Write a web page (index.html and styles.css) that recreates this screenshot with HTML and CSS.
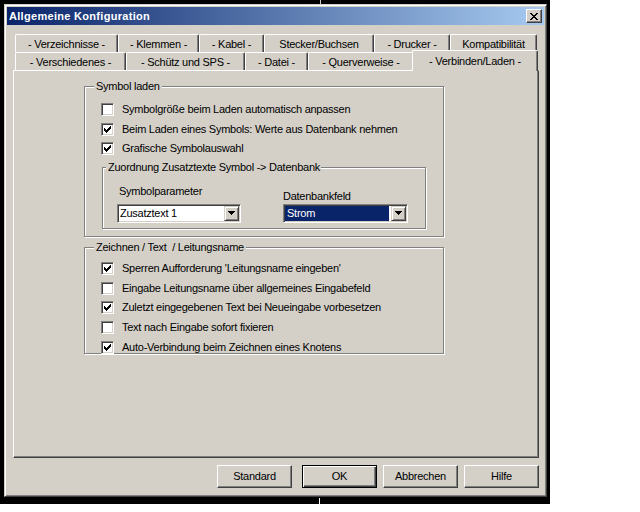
FILE: index.html
```html
<!DOCTYPE html>
<html>
<head>
<meta charset="utf-8">
<link rel="stylesheet" href="styles.css">
</head>
<body>
<div class="desk">
  <div class="dialog">
    <div class="titlebar">
      <span class="title">Allgemeine Konfiguration</span>
      <span class="close"><svg width="8" height="7" viewBox="0 0 8 7" shape-rendering="crispEdges"><path d="M0 0h2v1H0zM6 0h2v1H6zM1 1h2v1H1zM5 1h2v1H5zM2 2h4v1H2zM3 3h2v1H3zM2 4h4v1H2zM1 5h2v1H1zM5 5h2v1H5zM0 6h2v1H0zM6 6h2v1H6z" fill="#000"/></svg></span>
    </div>
    <div class="tabs">
      <div class="tabrow">
        <div class="tab t-verz">- Verzeichnisse -</div>
        <div class="tab t-klem">- Klemmen -</div>
        <div class="tab t-kab">- Kabel -</div>
        <div class="tab t-steck">Stecker/Buchsen</div>
        <div class="tab t-druck">- Drucker -</div>
        <div class="tab t-komp">Kompatibilität</div>
      </div>
      <div class="tabrow">
        <div class="tab t-versch">- Verschiedenes -</div>
        <div class="tab t-schuetz">- Schütz und SPS -</div>
        <div class="tab t-datei">- Datei -</div>
        <div class="tab t-quer">- Querverweise -</div>
        <div class="tab t-verb sel">- Verbinden/Laden -</div>
      </div>
    </div>
    <div class="panel">
      <div class="group g1">
        <div class="gtitle">Symbol laden</div>
        <div class="row"><span class="cb"></span><span class="lbltext">Symbolgröße beim Laden automatisch anpassen</span></div>
        <div class="row"><span class="cb"><svg width="7" height="7" viewBox="0 0 7 7" shape-rendering="crispEdges"><path d="M0 2h1v3H0zM1 3h1v3H1zM2 4h1v3H2zM3 3h1v3H3zM4 2h1v3H4zM5 1h1v3H5zM6 0h1v3H6z" fill="#000"/></svg></span><span class="lbltext">Beim Laden eines Symbols: Werte aus Datenbank nehmen</span></div>
        <div class="row"><span class="cb"><svg width="7" height="7" viewBox="0 0 7 7" shape-rendering="crispEdges"><path d="M0 2h1v3H0zM1 3h1v3H1zM2 4h1v3H2zM3 3h1v3H3zM4 2h1v3H4zM5 1h1v3H5zM6 0h1v3H6z" fill="#000"/></svg></span><span class="lbltext">Grafische Symbolauswahl</span></div>
        <div class="group inner">
          <div class="gtitle gt-inner">Zuordnung Zusatztexte Symbol -&gt; Datenbank</div>
          <div class="field f1">
            <div class="flabel fl1">Symbolparameter</div>
            <div class="combo">
              <span class="cval">Zusatztext 1</span>
              <span class="drop"><svg width="7" height="4" viewBox="0 0 7 4" shape-rendering="crispEdges"><path d="M0 0h7v1H0zM1 1h5v1H1zM2 2h3v1H2zM3 3h1v1H3z" fill="#000"/></svg></span>
            </div>
          </div>
          <div class="field f2">
            <div class="flabel fl2">Datenbankfeld</div>
            <div class="combo">
              <span class="cval csel">Strom</span>
              <span class="drop"><svg width="7" height="4" viewBox="0 0 7 4" shape-rendering="crispEdges"><path d="M0 0h7v1H0zM1 1h5v1H1zM2 2h3v1H2zM3 3h1v1H3z" fill="#000"/></svg></span>
            </div>
          </div>
        </div>
      </div>
      <div class="group g2">
        <div class="gtitle">Zeichnen / Text  / Leitungsname</div>
        <div class="row"><span class="cb"><svg width="7" height="7" viewBox="0 0 7 7" shape-rendering="crispEdges"><path d="M0 2h1v3H0zM1 3h1v3H1zM2 4h1v3H2zM3 3h1v3H3zM4 2h1v3H4zM5 1h1v3H5zM6 0h1v3H6z" fill="#000"/></svg></span><span class="lbltext">Sperren Aufforderung 'Leitungsname eingeben'</span></div>
        <div class="row"><span class="cb"></span><span class="lbltext">Eingabe Leitungsname über allgemeines Eingabefeld</span></div>
        <div class="row"><span class="cb"><svg width="7" height="7" viewBox="0 0 7 7" shape-rendering="crispEdges"><path d="M0 2h1v3H0zM1 3h1v3H1zM2 4h1v3H2zM3 3h1v3H3zM4 2h1v3H4zM5 1h1v3H5zM6 0h1v3H6z" fill="#000"/></svg></span><span class="lbltext">Zuletzt eingegebenen Text bei Neueingabe vorbesetzen</span></div>
        <div class="row"><span class="cb"></span><span class="lbltext">Text nach Eingabe sofort fixieren</span></div>
        <div class="row"><span class="cb"><svg width="7" height="7" viewBox="0 0 7 7" shape-rendering="crispEdges"><path d="M0 2h1v3H0zM1 3h1v3H1zM2 4h1v3H2zM3 3h1v3H3zM4 2h1v3H4zM5 1h1v3H5zM6 0h1v3H6z" fill="#000"/></svg></span><span class="lbltext">Auto-Verbindung beim Zeichnen eines Knotens</span></div>
      </div>
    </div>
    <div class="buttons">
      <div class="btn">Standard</div>
      <div class="btn default">OK</div>
      <div class="btn">Abbrechen</div>
      <div class="btn">Hilfe</div>
    </div>
  </div>
</div>
</body>
</html>
```
FILE: styles.css
```css
html, body {
  margin: 0;
  padding: 0;
  background: #fff;
}
body {
  font-family: "Liberation Sans", Arial, sans-serif;
  font-size: 11px;
  letter-spacing: -0.25px;
  color: #000;
}
.desk {
  position: relative;
  width: 550px;
  height: 504px;
  box-sizing: border-box;
  padding: 4px 0 0 4px;
  background: #000;
}
.desk::before {
  content: "";
  position: absolute;
  left: 320px;
  top: 0;
  width: 1px;
  height: 4px;
  background: #c8c8c8;
}
.desk::after {
  content: "";
  position: absolute;
  left: 319px;
  top: 498px;
  width: 1px;
  height: 6px;
  background: #fff;
}
.dialog {
  box-sizing: border-box;
  width: 543px;
  height: 493px;
  background: #d4d0c8;
  border: 1px solid;
  border-color: #d4d0c8 #404040 #404040 #d4d0c8;
  box-shadow: inset 1px 1px #fff, inset -1px -1px #808080;
  padding: 2px;
}
.titlebar {
  height: 18px;
  display: flex;
  align-items: center;
  justify-content: space-between;
  background: linear-gradient(to right, #0a246a, #a6caf0);
  padding: 0 2px 0 2px;
}
.title {
  color: #fff;
  font-weight: bold;
  letter-spacing: 0.3px;
  line-height: 18px;
}
.close {
  box-sizing: border-box;
  width: 16px;
  height: 14px;
  background: #d4d0c8;
  border: 1px solid;
  border-color: #fff #404040 #404040 #fff;
  box-shadow: inset -1px -1px #808080;
  display: flex;
  align-items: center;
  justify-content: center;
  padding-right: 1px;
}
.close svg, .cb svg, .drop svg {
  display: block;
}
.tabs {
  margin-top: 9px;
  padding-left: 8px;
}
.tabrow {
  display: flex;
  align-items: flex-start;
  height: 18px;
}
.tab {
  box-sizing: border-box;
  height: 18px;
  border-top: 1px solid #fff;
  border-left: 1px solid #fff;
  border-right: 1px solid #404040;
  box-shadow: inset -1px 0 #808080;
  border-radius: 2px 2px 0 0;
  background: #d4d0c8;
  text-align: center;
  line-height: 16px;
  padding-top: 1px;
  white-space: nowrap;
}
.t-verz { width: 103px; }
.t-klem { width: 81px; }
.t-kab { width: 65px; }
.t-steck { width: 110px; }
.t-druck { width: 76px; }
.t-komp { width: 87px; }
.t-versch { width: 111px; }
.t-schuetz { width: 119px; }
.t-datei { width: 63px; }
.t-quer { width: 106px; }
.t-verb { width: 122px; }
.tab.sel {
  position: relative;
  z-index: 2;
  height: 21px;
  width: 126px;
  margin: -2px -2px 0 -2px;
  padding-top: 2px;
}
.panel {
  box-sizing: border-box;
  margin-left: 6px;
  width: 526px;
  height: 388px;
  border: 1px solid;
  border-color: #fff #404040 #404040 #fff;
  box-shadow: inset -1px -1px #808080;
  padding: 15px 0 0 70px;
}
.group {
  position: relative;
  box-sizing: border-box;
  border: 1px solid #808080;
  box-shadow: inset 1px 1px #fff, 1px 1px #fff;
}
.g1 {
  width: 360px;
  height: 151px;
  padding: 13px 0 0 16px;
}
.g2 {
  width: 360px;
  height: 107px;
  margin-top: 10px;
  padding: 11px 0 0 16px;
}
.gtitle {
  position: absolute;
  top: -7px;
  left: 9px;
  padding: 0 2px;
  line-height: 13px;
  background: #d4d0c8;
  white-space: pre;
}
.gt-inner {
  left: 3px;
  padding: 0 1px 0 2px;
}
.row {
  display: flex;
  align-items: center;
  height: 19.6px;
  line-height: 13px;
}
.cb {
  box-sizing: border-box;
  width: 13px;
  height: 13px;
  padding: 2px;
  background: #fff;
  border: 1px solid;
  border-color: #808080 #fff #fff #808080;
  box-shadow: inset 1px 1px #404040, inset -1px -1px #d4d0c8;
  margin-right: 8px;
  flex: none;
}
.lbltext {
  white-space: nowrap;
}
.inner {
  width: 324px;
  height: 62px;
  margin: 8px 0 0 1px;
  display: flex;
  align-items: flex-end;
  padding: 0 0 5px 14px;
}
.field {
  display: flex;
  flex-direction: column;
}
.f1 { width: 124px; }
.f2 { width: 125px; margin-left: 42px; }
.flabel {
  line-height: 13px;
  padding-left: 2px;
  white-space: nowrap;
}
.fl1 { margin-bottom: 6px; }
.fl2 { margin-bottom: 1px; padding-left: 0; }
.combo {
  box-sizing: border-box;
  height: 19px;
  background: #fff;
  border: 1px solid;
  border-color: #808080 #fff #fff #808080;
  box-shadow: inset 1px 1px #404040, inset -1px -1px #d4d0c8;
  padding: 1px;
  display: flex;
}
.cval {
  flex: 1;
  line-height: 15px;
  padding-left: 1px;
  white-space: nowrap;
}
.csel {
  background: #0a246a;
  color: #fff;
  margin-right: 2px;
  padding-left: 2px;
}
.drop {
  box-sizing: border-box;
  width: 15px;
  height: 15px;
  background: #d4d0c8;
  border: 1px solid;
  border-color: #d4d0c8 #404040 #404040 #d4d0c8;
  box-shadow: inset 1px 1px #fff, inset -1px -1px #808080;
  display: flex;
  align-items: center;
  justify-content: center;
  flex: none;
}
.buttons {
  display: flex;
  justify-content: flex-end;
  width: 526px;
  margin: 7px 0 0 6px;
}
.btn {
  box-sizing: border-box;
  width: 75px;
  height: 23px;
  margin-left: 6px;
  border: 1px solid;
  border-color: #fff #404040 #404040 #fff;
  box-shadow: inset -1px -1px #808080;
  text-align: center;
  line-height: 20px;
}
.btn.default {
  margin-left: 10px;
  border-color: #000;
  box-shadow: inset 1px 1px #fff, inset -1px -1px #404040, inset -2px -2px #808080;
}
```
